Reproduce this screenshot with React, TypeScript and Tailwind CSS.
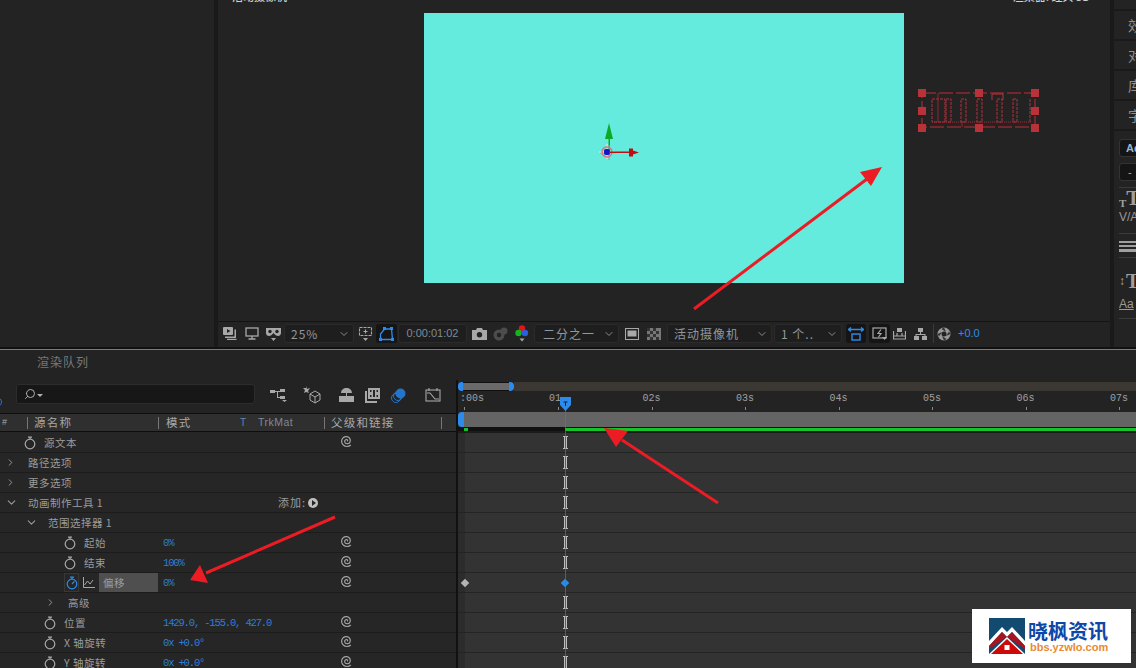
import { ChevronDown, ChevronRight, Search } from "lucide-react";

function Stopwatch({ active = false }: { active?: boolean }) {
  const c = active ? "#2d8ceb" : "#a8a8a8";
  return (
    <svg width="12" height="14" viewBox="0 0 12 14" fill="none" stroke={c} strokeWidth="1.2">
      <circle cx="6" cy="8" r="4.8" />
      <path d="M4 1.2h4M6 1.2v2" />
      {active && <path d="M6 8l2.4-2.6" />}
    </svg>
  );
}

function Spiral() {
  return (
    <svg width="14" height="14" viewBox="0 0 13 13" fill="none" stroke="#a6a6a6" strokeWidth="1.1" className="-mt-[3px]">
      <path d="M6.6 6.8c.9-.5.4-1.800-.7-1.700-1.500.2-2 2-1.100 3.100 1.200 1.400 3.700 1 4.500-.8.9-2.100-.4-4.500-2.800-4.900C4 2 1.700 3.800 1.500 6.400c-.2 2.700 1.800 5 4.500 5.200 1.500.1 3-.4 4-1.400" />
    </svg>
  );
}

function Dropdown({ label, w }: { label: string; w: string }) {
  return (
    <div className={`flex h-[19px] items-center justify-between rounded-[3px] border border-[#2b2b2b] bg-[#1e1e1e] pl-[6px] pr-[3px] ${w}`}>
      <span className="text-[12px] tracking-[1px] text-[#8f979f]">{label}</span>
      <ChevronDown size={12} color="#8a8a8a" />
    </div>
  );
}

function ViewerToolbar() {
  return (
    <div className="flex h-[26px] shrink-0 items-center border-t border-[#141414] pb-[2px] pl-[5px]">
      <svg width="14" height="13" viewBox="0 0 14 13" fill="#a8a8a8" className="mr-[8px]">
        <rect x="0" y="0" width="10" height="8" rx="1" />
        <path d="M2 9.500h9.500V2.500H13V11H2zM4 11.700h9.500V13H4z" />
        <path d="M4 2l3.500 2L4 6z" fill="#222" />
      </svg>
      <svg width="14" height="13" viewBox="0 0 14 13" fill="none" stroke="#a8a8a8" strokeWidth="1.300" className="mr-[6px]">
        <rect x="1" y="1" width="12" height="8" />
        <path d="M7 9v2.500M3.500 12h7" />
      </svg>
      <div className="flex w-[17px]">
        <svg width="17" height="14" viewBox="0 0 17 14" fill="#a8a8a8">
          <path d="M1 1h15v5c0 2-1.500 3-3 3s-3-1-4.500-3C7 8 5.500 9 4 9S1 8 1 6z" />
          <circle cx="5" cy="4.500" r="1.700" fill="#222" />
          <circle cx="12" cy="4.500" r="1.700" fill="#222" />
          <path d="M6 11h5l-2.500 3z" />
        </svg>
      </div>
      <div className="ml-[2px]">
        <Dropdown label="25%" w="w-[70px]" />
      </div>
      <svg width="15" height="16" viewBox="0 0 15 16" fill="none" stroke="#a8a8a8" strokeWidth="1.100" strokeDasharray="3 1" className="ml-[4px]">
        <rect x="1.500" y="1.500" width="12" height="8" />
        <path d="M7.500 3.500v4M5.500 5.500h4" strokeDasharray="none" />
        <path d="M5 12h5l-2.500 3z" fill="#a8a8a8" stroke="none" />
      </svg>
      <div className="ml-[3px] flex h-[19px] w-[21px] items-center justify-center rounded-[3px] bg-[#151515]">
        <svg width="15" height="14" viewBox="0 0 15 14" fill="none" stroke="#2d8ceb" strokeWidth="1.300">
          <path d="M1.500 12.500V7l4-5h7l1 10.500z" />
          <path d="M0 11h3v3H0zM4 0h3v3H4zM11 0h3v3h-3zM12 11h3v3h-3z" fill="#2d8ceb" stroke="none" />
        </svg>
      </div>
      <div className="ml-[1px] flex h-[19px] w-[69px] items-center justify-center rounded-[3px] border border-[#2b2b2b] bg-[#1e1e1e] font-['Liberation_Sans',sans-serif] text-[11px] text-[#7f8a96]">
        0:00:01:02
      </div>
      <svg width="15" height="12" viewBox="0 0 15 12" fill="#a8a8a8" className="ml-[5px]">
        <path d="M0 2h4l1-2h5l1 2h4v10H0z" />
        <circle cx="7.500" cy="6.800" r="2.700" fill="#222" />
      </svg>
      <svg width="15" height="14" viewBox="0 0 15 14" fill="#4c4c4c" className="ml-[6px]">
        <circle cx="6" cy="8" r="5.500" />
        <circle cx="6" cy="8" r="2.200" fill="#222" />
        <circle cx="11" cy="4" r="3.500" />
      </svg>
      <svg width="14" height="17" viewBox="0 0 14 17" className="ml-[7px]">
        <circle cx="7" cy="3.500" r="3.200" fill="#e01515" />
        <circle cx="3.500" cy="8" r="3.200" fill="#14b41e" />
        <circle cx="10" cy="8" r="3.200" fill="#2a5fe0" />
        <path d="M4.500 13.500h5L7 16.500z" fill="#a8a8a8" />
      </svg>
      <div className="ml-[5px]">
        <Dropdown label="二分之一" w="w-[85px] pl-[8px]" />
      </div>
      <svg width="14" height="12" viewBox="0 0 14 12" fill="none" className="ml-[6px]">
        <rect x="0.500" y="0.500" width="13" height="11" stroke="#a8a8a8" />
        <rect x="2.500" y="2.500" width="9" height="6" fill="#a8a8a8" />
      </svg>
      <svg width="14" height="12" viewBox="0 0 14 12" className="ml-[8px]">
        <rect width="14" height="12" fill="#777" />
        <path d="M0 0h3v3H0zM6 0h3v3H6zM3 3h3v3H3zM9 3h3v3H9zM0 6h3v3H0zM6 6h3v3H6zM3 9h3v3H3zM9 9h3v3H9z" fill="#333" />
      </svg>
      <div className="ml-[6px]">
        <Dropdown label="活动摄像机" w="w-[105px]" />
      </div>
      <div className="ml-[2px]">
        <Dropdown label="1 个.." w="w-[68px]" />
      </div>
      <div className="ml-[4px] flex h-[19px] w-[20px] items-center justify-center rounded-[3px] bg-[#151515]">
        <svg width="16" height="14" viewBox="0 0 16 14" fill="none" stroke="#2d8ceb" strokeWidth="1.400">
          <path d="M0 2.500h16M3 .5l-2.500 2 2.500 2M13 .5l2.500 2-2.500 2" />
          <rect x="4" y="7" width="8" height="6" />
        </svg>
      </div>
      <div className="ml-[3px] flex h-[19px] w-[21px] items-center justify-center rounded-[3px] bg-[#151515]">
        <svg width="16" height="14" viewBox="0 0 16 14" fill="none" stroke="#a8a8a8" strokeWidth="1.200">
          <rect x="1" y="1" width="13" height="10" />
          <path d="M9 2.500L6 6.500h3L6.500 10" />
          <path d="M10 10h5l-2.500 3z" fill="#a8a8a8" stroke="none" />
        </svg>
      </div>
      <svg width="13" height="12" viewBox="0 0 13 12" fill="none" stroke="#a8a8a8" strokeWidth="1.200" className="ml-[3px]">
        <path d="M.5 3v8h12V3M.5 8h12M4 5v3M9 5v3" />
        <rect x="4" y="0" width="5" height="4" fill="#a8a8a8" stroke="none" />
      </svg>
      <svg width="13" height="12" viewBox="0 0 13 12" fill="#a8a8a8" className="ml-[8px]">
        <rect x="4" y="0" width="5" height="4" />
        <rect x="0" y="8" width="5" height="4" />
        <rect x="8" y="8" width="5" height="4" />
        <path d="M6 4h1v2h4.500v2h-1V7h-8v1h-1V6H6z" />
      </svg>
      <div className="ml-[6px] h-[19px] w-[1px] bg-[#3a3a3a]" />
      <svg width="14" height="14" viewBox="0 0 14 14" className="ml-[3px]">
        <circle cx="7" cy="7" r="6.500" fill="#9a9a9a" />
        <path d="M7 .5L9 5 4.500 2zM13.500 7L9 9l3-4.500zM7 13.500L5 9l4.500 3zM.5 7L5 5 2 9.500z" fill="#333" />
        <circle cx="7" cy="7" r="2.500" fill="#222" />
      </svg>
      <span className="ml-[7px] font-['Liberation_Sans',sans-serif] text-[11px] text-[#2d8ceb]">+0.0</span>
    </div>
  );
}

function Gizmo() {
  return (
    <svg width="52" height="56" viewBox="0 0 52 56" className="absolute left-[170px] top-[109px]">
      <path d="M15 1l4 16h-8z" fill="#0bab28" />
      <path d="M14.500 16h1.500v14h-1.500z" fill="#0bab28" />
      <path d="M15 23v15M6 31h16" stroke="#9aa8a8" strokeWidth="1.200" />
      <path d="M13 22v15M5 30h16" stroke="#efe0e0" strokeWidth="1.200" />
      <circle cx="13" cy="30" r="5" fill="none" stroke="#d8727a" strokeWidth="1.400" />
      <rect x="10" y="27" width="6" height="6" rx="2" fill="#1414c8" />
      <path d="M15 29.500h22v1.500H15z" fill="#bb0f14" />
      <path d="M35 26.500h4v2l6 2-6 2v2h-4z" fill="#bb0f14" />
    </svg>
  );
}

function TextLayerBox() {
  const handles = [
    [0, 4], [57, 4], [113, 4],
    [0, 22], [113, 22],
    [0, 39], [57, 39], [113, 39],
  ];
  return (
    <svg width="124" height="50" viewBox="0 0 124 50" fill="none" className="ml-[14px] mt-[82px] shrink-0">
      <rect x="4" y="8" width="113" height="34" stroke="#8f2a30" strokeWidth="1.500" strokeDasharray="14 3" />
      <path d="M14 14h13v23H14zM28 14h5v23h-5zM43 14h5v23h-5zM59 14h5v23h-5zM79 14h5v23h-5zM95 14h4v23h-4zM112 14v23" stroke="#ad343c" strokeDasharray="3 1" />
      <path d="M74 15V9h11v6" stroke="#b4343c" />
      <path d="M14 37h100" stroke="#a03038" strokeDasharray="1 1" />
      <path d="M20 8v29M44 37v5" stroke="#8f2a30" />
      {handles.map(([x, y]) => (
        <rect key={`${x}-${y}`} x={x} y={y} width="8" height="8" fill="#b8323a" />
      ))}
    </svg>
  );
}

function SidePanel() {
  const tabs = ["效", "对", "库", "字"];
  return (
    <div className="flex w-[22px] shrink-0 flex-col overflow-hidden bg-[#232323] font-['Noto_Sans_CJK_SC',sans-serif] text-[14px] text-[#8f8f8f]">
      <div className="h-[11px] shrink-0 overflow-hidden border-b-2 border-[#1a1a1a] pl-[14px]">
        <div className="-mt-[18px] leading-[20px]">预</div>
      </div>
      {tabs.map((t) => (
        <div key={t} className="flex h-[30px] shrink-0 items-center border-b-2 border-[#1a1a1a] pl-[14px] last:border-b-0">
          <span className="shrink-0">{t}</span>
        </div>
      ))}
      <div className="ml-[5px] mt-[8px] flex h-[18px] w-[40px] shrink-0 items-center rounded-[3px] border border-[#333] bg-[#151515] pl-[6px] font-['Liberation_Sans',sans-serif] text-[11px] font-bold text-[#9db4cc]">
        Ad
      </div>
      <div className="ml-[5px] mt-[6px] flex h-[18px] w-[40px] shrink-0 items-center rounded-[3px] border border-[#333] bg-[#151515] pl-[8px] font-['Liberation_Sans',sans-serif] text-[11px] text-[#aaa]">
        -
      </div>
      <div className="ml-[5px] mt-[6px] h-[1px] shrink-0 bg-[#3a3a3a]" />
      <div className="ml-[5px] mt-[3px] flex h-[18px] shrink-0 items-end font-['Liberation_Serif',serif] font-bold leading-none text-[#a0a0a0]">
        <span className="text-[11px]">T</span>
        <span className="text-[21px]">T</span>
      </div>
      <div className="ml-[5px] h-[17px] shrink-0 font-['Liberation_Sans',sans-serif] text-[12px] leading-[17px] text-[#9a9a9a]">V/A</div>
      <div className="ml-[5px] mt-[7px] h-[1px] shrink-0 bg-[#3a3a3a]" />
      <div className="ml-[5px] mt-[7px] flex w-[20px] shrink-0 flex-col gap-[2px]">
        <span className="h-[2px] bg-[#a0a0a0]" />
        <span className="h-[2px] bg-[#a0a0a0]" />
        <span className="h-[3px] bg-[#a0a0a0]" />
      </div>
      <div className="ml-[5px] mt-[5px] h-[1px] shrink-0 bg-[#3a3a3a]" />
      <div className="ml-[5px] mt-[13px] flex h-[20px] shrink-0 items-center font-['Liberation_Serif',serif] text-[20px] font-bold leading-none text-[#a0a0a0]">
        <span className="mr-[1px] text-[12px]">↕</span>T
      </div>
      <div className="ml-[5px] mt-[5px] h-[16px] shrink-0 font-['Liberation_Sans',sans-serif] text-[12px] leading-[16px] text-[#9a9a9a] underline">Aa</div>
      <div className="ml-[5px] mt-[6px] h-[1px] shrink-0 bg-[#3a3a3a]" />
    </div>
  );
}

type Prop = {
  label: string;
  pad: string;
  chevron?: "right" | "down";
  watch?: boolean;
  value?: string;
  link?: boolean;
  add?: boolean;
  selected?: boolean;
};

const rows: Prop[] = [
  { label: "源文本", pad: "pl-[24px]", watch: true, link: true },
  { label: "路径选项", pad: "pl-[5px]", chevron: "right" },
  { label: "更多选项", pad: "pl-[5px]", chevron: "right" },
  { label: "动画制作工具 1", pad: "pl-[5px]", chevron: "down", add: true },
  { label: "范围选择器 1", pad: "pl-[25px]", chevron: "down" },
  { label: "起始", pad: "pl-[64px]", watch: true, value: "0%", link: true },
  { label: "结束", pad: "pl-[64px]", watch: true, value: "100%", link: true },
  { label: "偏移", pad: "pl-[64px]", selected: true, value: "0%", link: true },
  { label: "高级", pad: "pl-[45px]", chevron: "right" },
  { label: "位置", pad: "pl-[44px]", watch: true, value: "1429.0, -155.0, 427.0", link: true },
  { label: "X 轴旋转", pad: "pl-[44px]", watch: true, value: "0x +0.0°", link: true },
  { label: "Y 轴旋转", pad: "pl-[44px]", watch: true, value: "0x +0.0°", link: true },
];

function PropRow({ row }: { row: Prop }) {
  return (
    <div className="flex h-5 shrink-0 items-center border-b border-[#1c1c1c] bg-[#262626] text-[10.500px] tracking-[0.500px] text-[#9c9c9c]">
      <div className={`flex h-full w-[163px] shrink-0 items-center ${row.pad}`}>
        {row.chevron === "right" && <ChevronRight size={11} color="#9a9a9a" className="mr-[12px]" />}
        {row.chevron === "down" && <ChevronDown size={13} color="#9a9a9a" className="mr-[10px]" />}
        {row.watch && (
          <span className="mr-[8px]">
            <Stopwatch />
          </span>
        )}
        {row.selected ? (
          <>
            <span className="flex h-[19px] w-[15px] items-center justify-center border border-[#383838]">
              <Stopwatch active />
            </span>
            <svg width="12" height="11" viewBox="0 0 12 11" fill="none" stroke="#a8a8a8" className="ml-[4px]">
              <path d="M.5 0v10.500H12M1.500 8l3-4 2.500 3 3-4" />
            </svg>
            <span className="ml-[4px] flex h-[19px] w-[59px] items-center bg-[#4f4f4f] pl-[4px]">{row.label}</span>
          </>
        ) : (
          <span className="whitespace-nowrap">{row.label}</span>
        )}
      </div>
      <div className="flex w-[155px] shrink-0 items-center pt-[2px] font-['Liberation_Mono',monospace] text-[10.500px] tracking-[-1.150px] text-[#2d7fd6]">
        {row.value}
        {row.add && (
          <span className="-mt-[2px] ml-auto flex items-center font-['Noto_Sans_CJK_SC',sans-serif] text-[11px] tracking-[1px] text-[#9c9c9c]">
            添加:
            <span className="ml-[2px] flex h-[10px] w-[10px] items-center justify-center rounded-full bg-[#c0c0c0]">
              <span className="ml-[1px] h-0 w-0 border-y-[3px] border-l-[4px] border-y-transparent border-l-[#262626]" />
            </span>
          </span>
        )}
      </div>
      <div className="ml-[22px] flex w-[14px]">{row.link && <Spiral />}</div>
    </div>
  );
}

function LayerPanel() {
  const icons = (
    <div className="ml-[15px] flex items-center">
      <svg width="17" height="14" viewBox="0 0 17 14" fill="#a8a8a8">
        <rect x="0" y="2" width="5" height="3" />
        <rect x="10" y="1" width="5" height="3" />
        <rect x="10" y="8" width="5" height="3" />
        <path d="M5 3h5v1H8v5h2v1H7V4H5z" />
        <path d="M12 12h5l-2.500 2z" />
      </svg>
      <svg width="18" height="18" viewBox="0 0 18 18" className="ml-[16px]" fill="none" stroke="#a8a8a8">
        <path d="M3 0l1 3 3-1-2 3 1 2-3-1-2 1 1-3-2-2 3 0z" fill="#a8a8a8" stroke="none" />
        <path d="M12 5l5 3v6l-5 3-5-3V8zM7 8l5 3 5-3M12 11v6" />
      </svg>
      <svg width="17" height="14" viewBox="0 0 17 14" fill="#a8a8a8" className="ml-[17px]">
        <path d="M3 5C3 2 5.500 0 8.500 0S14 2 14 5zM8 5h1v3H8zM1 8h15v6H1z" />
      </svg>
      <svg width="15" height="15" viewBox="0 0 15 15" fill="#a8a8a8" className="ml-[10px]">
        <path d="M3 0h12v11H3zM0 3h2v10h10v2H0z" />
        <path d="M5 2h1.500v2H5zM11.500 2H13v2h-1.500zM5 7h1.500v2H5zM11.500 7H13v2h-1.500zM8 2h2v7H8z" fill="#262626" />
      </svg>
      <svg width="15" height="15" viewBox="0 0 15 15" fill="none" className="ml-[11px]">
        <ellipse cx="5" cy="10" rx="4.500" ry="4.500" stroke="#2374cc" />
        <ellipse cx="7" cy="8" rx="4.500" ry="4.500" stroke="#2374cc" />
        <circle cx="9.500" cy="5.500" r="5" fill="#2374cc" />
      </svg>
      <svg width="16" height="14" viewBox="0 0 16 14" fill="none" stroke="#a8a8a8" strokeWidth="1.100" className="ml-[19px]">
        <rect x="1" y="2" width="14" height="11" />
        <path d="M4 0v3M12 0v3M2 5h3l5 6h4" />
      </svg>
    </div>
  );

  return (
    <div className="flex w-[456px] shrink-0 flex-col">
      <div className="flex h-[33px] shrink-0 items-start">
        <span className="-ml-[8px] mt-[17px] h-[10px] w-[10px] shrink-0 rounded-full border border-[#2374cc]" />
        <div className="ml-[14px] mt-[4px] flex h-[20px] w-[239px] shrink-0 items-center rounded-[3px] border border-[#2c2c2c] bg-[#171717] pl-[7px]">
          <Search size={12} color="#b0b0b0" className="-scale-x-100" />
          <span className="ml-[1px] mt-[2px] h-0 w-0 border-x-[3px] border-t-[3px] border-x-transparent border-t-[#b0b0b0]" />
        </div>
        <div className="mt-[6px]">{icons}</div>
      </div>
      <div className="flex h-[19px] shrink-0 items-center border-y border-[#0e0e0e] bg-[#2f2f2f] text-[11.500px] tracking-[1.200px] text-[#a8a8a8]">
        <span className="ml-[2px] w-[25px] font-['Liberation_Sans',sans-serif] text-[9px]">#</span>
        <span className="h-[12px] w-[1px] bg-[#777]" />
        <span className="ml-[6px] w-[124px]">源名称</span>
        <span className="h-[12px] w-[1px] bg-[#777]" />
        <span className="ml-[7px] w-[74px]">模式</span>
        <span className="w-[18px] font-['Liberation_Sans',sans-serif] text-[10px] tracking-normal text-[#5f86ad]">T</span>
        <span className="w-[66px] font-['Liberation_Sans',sans-serif] text-[10.500px] tracking-[0.500px] text-[#808a94]">TrkMat</span>
        <span className="h-[12px] w-[1px] bg-[#777]" />
        <span className="ml-[6px] w-[110px]">父级和链接</span>
        <span className="h-[12px] w-[1px] bg-[#777]" />
      </div>
      <div className="h-[1px] shrink-0 bg-[#262626]" />
      {rows.map((r) => (
        <PropRow key={r.label} row={r} />
      ))}
    </div>
  );
}

function Timeline() {
  const ticks = ["01", "02s", "03s", "04s", "05s", "06s", "07s"];
  return (
    <div className="relative flex min-w-0 flex-1 flex-col border-l-2 border-[#111]">
      {/* navigator */}
      <div className="mt-[2px] flex h-[9px] shrink-0 items-stretch">
        <span className="h-full w-[5px] rounded-l-[4px] bg-[#2d8ceb]" />
        <span className="w-[46px] border-y border-[#111] bg-[#6a6a6a]" />
        <span className="h-full w-[5px] rounded-r-[4px] bg-[#2d8ceb]" />
        <span className="flex-1 bg-[#3b3733]" />
      </div>
      {/* ruler */}
      <div className="flex h-[21px] shrink-0 items-start pt-[3px] font-['Liberation_Mono',monospace] text-[10px] leading-[10px] text-[#a0a0a0]">
        <span className="flex w-[91px] shrink-0 flex-col whitespace-nowrap pl-[2px]">
          :00s
          <i className="ml-[4px] mt-[3px] h-[3px] w-[1px] bg-[#888]" />
        </span>
        {ticks.map((t) => (
          <span key={t} className="flex w-[93.500px] shrink-0 flex-col">
            {t}
            <i className="ml-[9px] mt-[3px] h-[3px] w-[1px] bg-[#888]" />
          </span>
        ))}
      </div>
      {/* work area */}
      <div className="flex h-[15px] shrink-0">
        <span className="w-[6px] rounded-l-[4px] bg-[#2d8ceb]" />
        <span className="flex-1 bg-[#646464]" />
      </div>
      <div className="h-[1px] shrink-0 bg-[#111]" />
      <div className="flex h-[3px] shrink-0 bg-[#111]">
        <span className="ml-[6px] w-[4px] bg-[#14c42a]" />
        <span className="ml-[97px] flex-1 bg-[#14c42a]" />
      </div>
      <div className="h-[2px] shrink-0 bg-[#1c1c1c]" />
      {rows.map((r) => (
        <div key={r.label} className="flex h-5 shrink-0 items-center border-b border-[#242424] bg-[#333333]">
          <span className="h-full w-[7px] shrink-0 bg-[#2c2c2c]" />
          {r.selected ? (
            <>
              <span className="-ml-[3px] h-[6px] w-[6px] rotate-45 bg-[#b4b4b4]" />
              <span className="ml-[94px] h-[6px] w-[6px] rotate-45 bg-[#2d8ceb]" />
            </>
          ) : (
            <svg width="7" height="13" viewBox="0 0 7 13" fill="none" stroke="#bcbcbc" className="ml-[97px]">
              <path d="M1 .5h5M1 12.500h5M2.500 0v13M4.500 0v13" />
            </svg>
          )}
        </div>
      ))}
      {/* playhead */}
      <div className="absolute left-[107px] top-[17px] bottom-0 w-[1px] bg-[#2d7fd6]/70" />
      <svg width="11" height="14" viewBox="0 0 11 14" className="absolute left-[102px] top-[17px]">
        <path d="M0 0h11v8l-5.500 6L0 8z" fill="#2d8ceb" />
        <path d="M3.500 5h4M5.500 5v4" stroke="#123" />
      </svg>
    </div>
  );
}

function Arrows() {
  return (
    <svg width="1136" height="668" viewBox="0 0 1136 668" className="pointer-events-none absolute left-0 top-0" fill="#ec1c24" stroke="none">
      <path d="M694 309L867 179" stroke="#ec1c24" strokeWidth="3" />
      <path d="M882 167L860 172L871 186z" />
      <path d="M718 503L622 440" stroke="#ec1c24" strokeWidth="3" />
      <path d="M604 428L616 447L628 431z" />
      <path d="M335 517L206 573" stroke="#ec1c24" strokeWidth="3" />
      <path d="M190 580L208 583L200 565z" />
    </svg>
  );
}

function Watermark() {
  return (
    <div className="absolute left-[972px] top-[609px] flex h-[54px] w-[159px] items-center bg-white pl-[17px]">
      <svg width="36" height="36" viewBox="0 0 36 36">
        <rect width="36" height="36" fill="#124a72" />
        <path d="M0 23L13 9l5 5 5-5 13 14v5L23 14l-5 5-5-5L0 28z" fill="#fff" />
        <path d="M0 28L13 14l5 5-18 12z" fill="#a81520" />
        <path d="M36 28L23 14l-5 5 18 12z" fill="#a81520" />
        <path d="M18 19l18 17H0z" fill="#fff" />
        <path d="M18 21l16 15H2z" fill="#cc0a0a" />
        <rect x="15.500" y="27" width="5" height="5" fill="#fff" />
      </svg>
      <div className="ml-[3px] flex flex-col">
        <div className="h-[22px] text-[20px] font-bold leading-[22px] text-[#0d47a8]">晓枫资讯</div>
        <div className="h-[11px] pl-[2px] font-['Liberation_Sans',sans-serif] text-[11px] font-bold leading-[11px] text-[#ea8a32]">bbs.yzwlo.com</div>
      </div>
    </div>
  );
}

export default function App() {
  return (
    <div className="relative flex h-[668px] w-[1136px] flex-col overflow-hidden bg-[#1a1a1a] font-['Noto_Sans_CJK_SC','Liberation_Sans',sans-serif]">
      <div className="flex h-[347px] shrink-0 gap-[4px]">
        <div className="w-[214px] shrink-0 bg-[#232323]" />
        <div className="flex min-w-0 flex-1 flex-col bg-[#232323]">
          <div className="flex h-[3px] shrink-0 justify-between overflow-hidden pl-[14px] pr-[20px] text-[11px] font-medium leading-[14px] text-[#d0d0d0]">
            <span className="-mt-[11px]">活动摄像机</span>
            <span className="-mt-[11px]">渲染器: 经典 3D</span>
          </div>
          <div className="flex min-h-0 flex-1 pl-[206px]">
            <div className="relative mt-[10px] h-[270px] w-[480px] shrink-0 bg-[#64ebdd]">
              <Gizmo />
            </div>
            <TextLayerBox />
          </div>
          <ViewerToolbar />
        </div>
        <SidePanel />
      </div>
      <div className="h-[2px] shrink-0 bg-[#111]" />
      <div className="flex min-h-0 flex-1 flex-col border-t border-[#2d8ceb] bg-[#232323]">
        <div className="flex h-[30px] shrink-0 items-center pb-[6px] pl-[37px] text-[12px] tracking-[1px] text-[#7a7a7a]">渲染队列</div>
        <div className="flex min-h-0 flex-1">
          <LayerPanel />
          <Timeline />
        </div>
      </div>
      <Arrows />
      <Watermark />
    </div>
  );
}
